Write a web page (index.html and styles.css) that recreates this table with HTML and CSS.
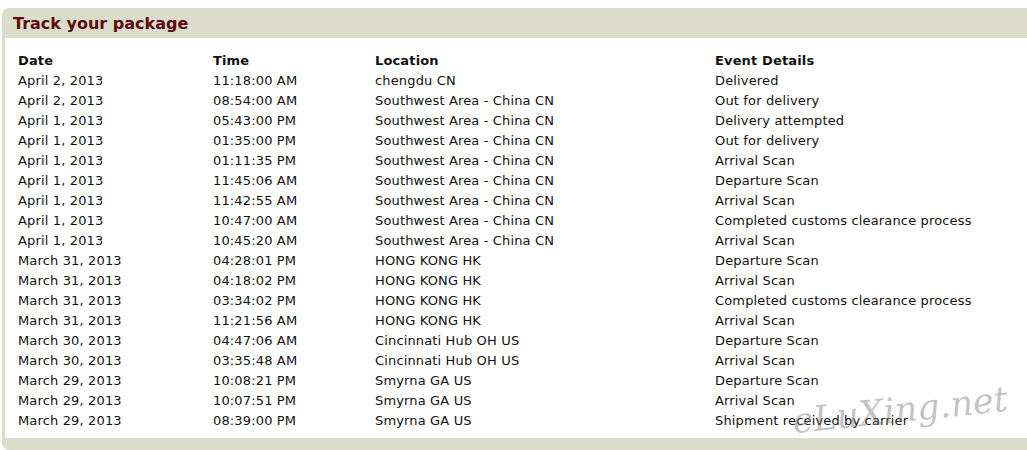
FILE: index.html
```html
<!DOCTYPE html>
<html>
<head>
<meta charset="utf-8">
<link rel="stylesheet" href="styles.css">
</head>
<body>
<div class="panel">
  <div class="panel-head"><h2 class="title">Track your package</h2></div>
  <div class="panel-body">
    <div class="grid">
      <div class="th">Date</div><div class="th">Time</div><div class="th">Location</div><div class="th">Event Details</div>
      <div>April 2, 2013</div><div>11:18:00 AM</div><div>chengdu CN</div><div>Delivered</div>
      <div>April 2, 2013</div><div>08:54:00 AM</div><div>Southwest Area - China CN</div><div>Out for delivery</div>
      <div>April 1, 2013</div><div>05:43:00 PM</div><div>Southwest Area - China CN</div><div>Delivery attempted</div>
      <div>April 1, 2013</div><div>01:35:00 PM</div><div>Southwest Area - China CN</div><div>Out for delivery</div>
      <div>April 1, 2013</div><div>01:11:35 PM</div><div>Southwest Area - China CN</div><div>Arrival Scan</div>
      <div>April 1, 2013</div><div>11:45:06 AM</div><div>Southwest Area - China CN</div><div>Departure Scan</div>
      <div>April 1, 2013</div><div>11:42:55 AM</div><div>Southwest Area - China CN</div><div>Arrival Scan</div>
      <div>April 1, 2013</div><div>10:47:00 AM</div><div>Southwest Area - China CN</div><div>Completed customs clearance process</div>
      <div>April 1, 2013</div><div>10:45:20 AM</div><div>Southwest Area - China CN</div><div>Arrival Scan</div>
      <div>March 31, 2013</div><div>04:28:01 PM</div><div>HONG KONG HK</div><div>Departure Scan</div>
      <div>March 31, 2013</div><div>04:18:02 PM</div><div>HONG KONG HK</div><div>Arrival Scan</div>
      <div>March 31, 2013</div><div>03:34:02 PM</div><div>HONG KONG HK</div><div>Completed customs clearance process</div>
      <div>March 31, 2013</div><div>11:21:56 AM</div><div>HONG KONG HK</div><div>Arrival Scan</div>
      <div>March 30, 2013</div><div>04:47:06 AM</div><div>Cincinnati Hub OH US</div><div>Departure Scan</div>
      <div>March 30, 2013</div><div>03:35:48 AM</div><div>Cincinnati Hub OH US</div><div>Arrival Scan</div>
      <div>March 29, 2013</div><div>10:08:21 PM</div><div>Smyrna GA US</div><div>Departure Scan</div>
      <div>March 29, 2013</div><div>10:07:51 PM</div><div>Smyrna GA US</div><div>Arrival Scan</div>
      <div>March 29, 2013</div><div>08:39:00 PM</div><div>Smyrna GA US</div><div>Shipment received by carrier</div>
    </div>
  </div>
</div>
<div class="watermark">eLuXing.net</div>
</body>
</html>
```
FILE: styles.css
```css
html, body {
  margin: 0;
  padding: 0;
  background: #ffffff;
  overflow: hidden;
}
body {
  width: 1027px;
  height: 450px;
  position: relative;
  font-family: "DejaVu Sans", Verdana, sans-serif;
  font-size: 13px;
  letter-spacing: 0.15px;
  color: #111;
}
.panel {
  margin: 8px 0 0 2px;
  background: #dcdccc;
  border-radius: 7px 0 0 7px;
  padding: 0 0 12px 3px;
}
.panel-head {
  height: 30px;
  display: flex;
  align-items: center;
  padding-left: 8px;
}
.title {
  margin: 0;
  font-size: 16px;
  font-weight: bold;
  letter-spacing: 0;
  color: #5c0a0a;
}
.panel-body {
  background: #ffffff;
  padding: 12px 0 8px 13px;
}
.grid {
  display: grid;
  grid-template-columns: 195px 162px 340px 1fr;
  grid-auto-rows: 20px;
  align-items: center;
  white-space: nowrap;
}
.th {
  font-weight: bold;
}
.watermark {
  position: absolute;
  left: 792px;
  top: 390px;
  font-family: "DejaVu Serif", serif;
  font-style: italic;
  font-size: 35px;
  color: rgba(120, 120, 120, 0.45);
  letter-spacing: 0;
  transform: rotate(-6deg);
  pointer-events: none;
}
```
